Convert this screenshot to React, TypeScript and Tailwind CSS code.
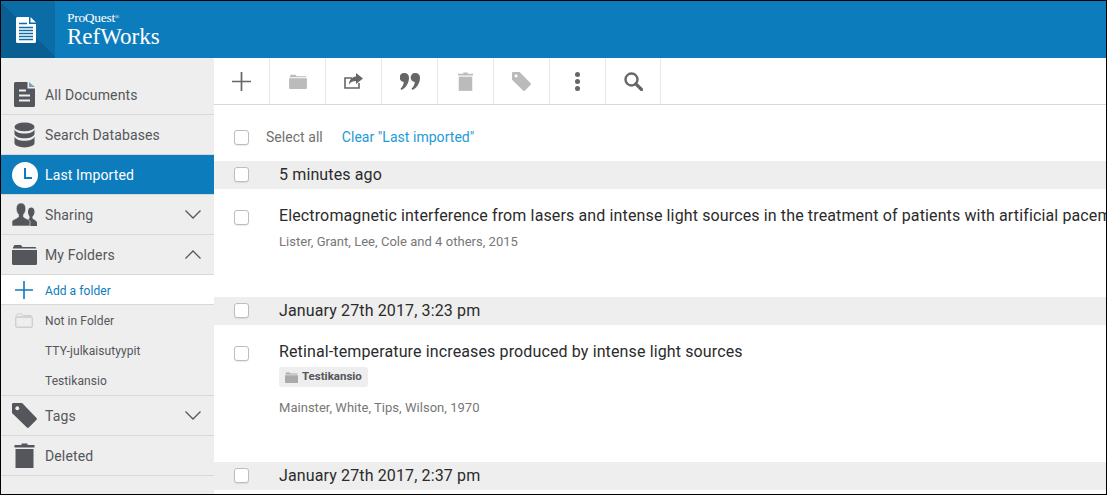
const dark = "#54565b"
const gray = "#bbbbbb"

function DocIcon({ className = "" }: { className?: string }) {
  return (
    <svg viewBox="0 0 21 25" className={className}>
      <path d="M1.500 0H13.500V6.500H21V23.500A1.500 1.500 0 0 1 19.500 25H1.500A1.500 1.500 0 0 1 0 23.500V1.500A1.500 1.500 0 0 1 1.500 0Z" fill={dark} />
      <path d="M15 0L21 5H15Z" fill="#7d9fb8" />
      <path d="M5 8.500h7M5 13.500h11M5 18.500h11" stroke="#eeeeee" strokeWidth="2" fill="none" />
    </svg>
  )
}

function HeaderDoc() {
  return (
    <svg viewBox="0 0 20 26" className="w-[20px] h-[26px]">
      <path d="M1.500 0H13V7H20V24.500A1.500 1.500 0 0 1 18.500 26H1.500A1.500 1.500 0 0 1 0 24.500V1.500A1.500 1.500 0 0 1 1.500 0Z" fill="#fff" />
      <path d="M14.500 0L20 5.500H14.500Z" fill="#fff" />
      <path d="M3 6.500h8M3 10.500h14M3 13.500h14M3 16.500h14M3 19.500h14M3 22.500h14" stroke="#0b6ca6" strokeWidth="1.500" fill="none" />
    </svg>
  )
}

function DbIcon() {
  return (
    <svg viewBox="0 0 22 26" className="w-[21px] h-[26px]">
      <ellipse cx="11" cy="4.500" rx="10.500" ry="4.500" fill={dark} />
      <path d="M.5 7c1 3 5 4.500 10.500 4.500S20.500 10 21.500 7v5c-1 3-5 4.500-10.500 4.500S1.500 15 .5 12Z" fill={dark} />
      <path d="M.5 14.500c1 3 5 4.500 10.500 4.500s9.500-1.500 10.500-4.500v7C21.500 24 17 26 11 26S.5 24 .5 21.500Z" fill={dark} />
    </svg>
  )
}

function ClockIcon() {
  return (
    <svg viewBox="0 0 26 26" className="w-[26px] h-[26px]">
      <circle cx="13" cy="13" r="13" fill="#fff" />
      <path d="M13 6v10h7" stroke="#0d7cbd" strokeWidth="2" fill="none" />
    </svg>
  )
}

function PeopleIcon() {
  return (
    <svg viewBox="0 0 25 23" className="w-[25px] h-[23px]">
      <path d="M16 23H25V19.500C25 18 21.500 16.500 20.500 15.500V13.500C21.800 12.500 22.500 10.500 22.500 8.500C22.500 6 21 4.500 19.300 4.500C17.500 4.500 16 6 16 8.500C16 10.500 16.500 12 17.500 13.500V15.500L15 17Z" fill={dark} />
      <path d="M0 23V18.500C0 17 4.500 15.500 6.500 14V11.500C5 10 4.300 8 4.300 5.500C4.300 2 6.300 0 9 0S13.700 2 13.700 5.500C13.700 8 13 10 11.500 11.500V14C13.500 15.500 18 17 18 18.500V23Z" fill={dark} stroke="#eeeeee" strokeWidth=".6" />
    </svg>
  )
}

function FolderIcon({ color = dark, className = "" }: { color?: string; className?: string }) {
  return (
    <svg viewBox="0 0 25 21" className={className}>
      <path d="M1 3.500L2.500 1H9L10.500 3H23.500L24.500 4.500H1Z" fill={color} />
      <path d="M0 6H25V19.500A1.500 1.500 0 0 1 23.500 21H1.500A1.500 1.500 0 0 1 0 19.500Z" fill={color} />
    </svg>
  )
}

function OutlineFolder() {
  return (
    <svg viewBox="0 0 18 15" className="w-[18px] h-[15px]">
      <path d="M1 3V2L2 1H7L8 2.500H16L17 4H1" fill="none" stroke="#cfcfcf" strokeWidth="1" />
      <rect x=".7" y="4" width="16.600" height="10.300" rx="1.500" fill="none" stroke="#cfcfcf" strokeWidth="1.400" />
    </svg>
  )
}

function TagIcon({ color = dark, hole = "#eeeeee", className = "" }: { color?: string; hole?: string; className?: string }) {
  return (
    <svg viewBox="0 0 26 26" className={className}>
      <path d="M1.500 0H10.500L25.500 15.500Q26.300 16.500 25.500 17.500L17.500 25.500Q16.500 26.300 15.500 25.500L0 10.500V1.500A1.500 1.500 0 0 1 1.500 0Z" fill={color} />
      <circle cx="5.500" cy="5.500" r="2" fill={hole} />
    </svg>
  )
}

function TrashIcon({ color = dark, className = "" }: { color?: string; className?: string }) {
  return (
    <svg viewBox="0 0 20 25" className={className}>
      <path d="M7 2V.5H13V2H20V4.500H0V2Z" fill={color} />
      <path d="M1 6H19V25H1Z" fill={color} />
    </svg>
  )
}

function PlusIcon({ size, color }: { size: string; color: string }) {
  return (
    <svg viewBox="0 0 20 20" className={size}>
      <path d="M0 10H20M10 0V20" stroke={color} strokeWidth="1.800" fill="none" />
    </svg>
  )
}

function Chevron({ up }: { up?: boolean }) {
  return (
    <svg viewBox="0 0 16 9" className="w-[16px] h-[9px] mr-[13px]">
      <path d={up ? "M.5 8.500L8 1L15.500 8.500" : "M.5 .5L8 8L15.500 .5"} stroke="#55565b" strokeWidth="1.300" fill="none" />
    </svg>
  )
}

function SideRow({ icon, label, chevron, active }: { icon: React.ReactNode; label: string; chevron?: "up" | "down"; active?: boolean }) {
  return (
    <div className={`h-10 flex items-center border-b border-[#d8d8d8] ${active ? "bg-[#0d7cbd] text-white" : "text-[#55565b]"}`}>
      <div className="w-[44px] flex justify-center shrink-0 pl-[3px]">{icon}</div>
      <span className="text-[14px] tracking-[0.13px] flex-1 pt-[2px]">{label}</span>
      {chevron && <Chevron up={chevron === "up"} />}
    </div>
  )
}

function SubRow({ label, icon }: { label: string; icon?: React.ReactNode }) {
  return (
    <div className="h-[30px] flex items-center text-[12px] tracking-[0.07px] text-[#55565b]">
      <div className="w-[44px] flex justify-center shrink-0 pl-[1px]">{icon}</div>
      <span className="pt-[2px]">{label}</span>
    </div>
  )
}

function ToolCell({ children, last }: { children: React.ReactNode; last?: boolean }) {
  return <div className={`${last ? "w-[55px]" : "w-[56px]"} h-full flex items-center justify-center border-r border-[#e8e8e8]`}>{children}</div>
}

function Check() {
  return <div className="w-[15px] h-[15px] rounded-[3px] border border-[#bdbdbd] bg-white shrink-0 shadow-[0_1px_1px_rgba(0,0,0,0.08)]" />
}

function DateBand({ label }: { label: string }) {
  return (
    <div className="h-[28px] bg-[#eeeeee] flex items-center pl-[20px] shrink-0">
      <div className="mb-[1px]"><Check /></div>
      <span className="ml-[30px] text-[16px] tracking-[0.13px] text-[#2b2b2b]">{label}</span>
    </div>
  )
}

export default function App() {
  return (
    <div className="w-[1107px] h-[495px] flex flex-col border border-black overflow-hidden bg-white font-['Roboto',sans-serif]">
      {/* Header */}
      <div className="h-[57px] bg-[#0d7cbd] flex shrink-0">
        <div className="w-[54px] bg-[linear-gradient(45deg,#0a5f92_50%,#0b6ca6_50%)] flex items-center justify-center pr-[4px]">
          <HeaderDoc />
        </div>
        <div className="ml-[12px] pt-[10px] text-white font-['Liberation_Serif',serif]">
          <div className="text-[13.500px] leading-[14px] tracking-[-0.3px]">ProQuest<sup className="text-[6px]">®</sup></div>
          <div className="text-[23px] leading-[24px]">RefWorks</div>
        </div>
      </div>

      <div className="flex flex-1 min-h-0">
        {/* Sidebar */}
        <div className="w-[213px] bg-[#eeeeee] pt-[17px] shrink-0">
          <SideRow icon={<DocIcon className="w-[21px] h-[25px]" />} label="All Documents" />
          <SideRow icon={<DbIcon />} label="Search Databases" />
          <SideRow icon={<ClockIcon />} label="Last Imported" active />
          <SideRow icon={<PeopleIcon />} label="Sharing" chevron="down" />
          <SideRow icon={<FolderIcon className="w-[25px] h-[21px]" />} label="My Folders" chevron="up" />
          <div className="h-[30px] bg-white flex items-center text-[12px] tracking-[0.07px] text-[#0d7cbd] border-b border-[#d8d8d8]">
            <div className="w-[44px] flex justify-center shrink-0 pl-[1px]">
              <PlusIcon size="w-[18px] h-[18px]" color="#0d7cbd" />
            </div>
            <span className="pt-[2px]">Add a folder</span>
          </div>
          <div className="border-b border-[#d8d8d8]">
            <SubRow label="Not in Folder" icon={<OutlineFolder />} />
            <SubRow label="TTY-julkaisutyypit" />
            <SubRow label="Testikansio" />
          </div>
          <SideRow icon={<TagIcon className="w-[25px] h-[25px]" />} label="Tags" chevron="down" />
          <SideRow icon={<TrashIcon className="w-[21px] h-[25px]" />} label="Deleted" />
        </div>

        {/* Main */}
        <div className="flex-1 min-w-0 flex flex-col overflow-hidden">
          <div className="h-[47px] flex border-b border-[#d8d8d8] shrink-0">
            <ToolCell><PlusIcon size="w-[19px] h-[19px]" color="#666" /></ToolCell>
            <ToolCell><FolderIcon color={gray} className="w-[18px] h-[15px]" /></ToolCell>
            <ToolCell>
              <svg viewBox="0 0 19 16" className="w-[19px] h-[16px]">
                <path d="M8 5H1V15H15V10" fill="none" stroke="#666" strokeWidth="1.600" />
                <path d="M12 0L19 5.500L12 11V8C9 8 6.500 9 5 11.500C5 7 8 4 12 3.500Z" fill="#666" />
              </svg>
            </ToolCell>
            <ToolCell>
              <svg viewBox="0 0 20 17" className="w-[20px] h-[17px]">
                <path d="M4.500 0A4.500 4.500 0 0 1 9 4.500C9 10 6 15 1.500 17L.500 15.500C2.500 14 3.500 12 3.800 9A4.500 4.500 0 0 1 4.500 0Z" fill="#666" />
                <path d="M15.500 0A4.500 4.500 0 0 1 20 4.500C20 10 17 15 12.500 17L11.500 15.500C13.500 14 14.500 12 14.800 9A4.500 4.500 0 0 1 15.500 0Z" fill="#666" />
              </svg>
            </ToolCell>
            <ToolCell><TrashIcon color={gray} className="w-[15px] h-[19px]" /></ToolCell>
            <ToolCell><TagIcon color={gray} hole="#fff" className="w-[19px] h-[19px]" /></ToolCell>
            <ToolCell>
              <div className="flex flex-col gap-[2px]">
                <div className="w-[5px] h-[5px] rounded-full bg-[#666]" />
                <div className="w-[5px] h-[5px] rounded-full bg-[#666]" />
                <div className="w-[5px] h-[5px] rounded-full bg-[#666]" />
              </div>
            </ToolCell>
            <ToolCell last>
              <svg viewBox="0 0 19 19" className="w-[19px] h-[19px]">
                <circle cx="7.500" cy="7.500" r="6" fill="none" stroke="#666" strokeWidth="2.400" />
                <path d="M11.800 11.800L17.500 17.500" stroke="#666" strokeWidth="3.200" strokeLinecap="round" />
              </svg>
            </ToolCell>
          </div>

          <div className="h-[56px] flex items-center pl-[20px] pt-[8px] text-[14px] tracking-[0.04px] shrink-0">
            <Check />
            <span className="ml-[17px] text-[#707070]">Select all</span>
            <span className="ml-[19px] text-[#1e9ad6]">Clear "Last imported"</span>
          </div>

          <DateBand label="5 minutes ago" />
          <div className="h-[108px] pl-[20px] pt-[17px] flex shrink-0">
            <div className="pt-[4px]"><Check /></div>
            <div className="ml-[30px] whitespace-nowrap">
              <div className="text-[16px] tracking-[0.13px] leading-[20px] text-[#2b2b2b]">
                Electromagnetic interference from lasers and intense light sources in the treatment of patients with artificial pacemakers and other implantable devices
              </div>
              <div className="mt-[8px] text-[13px] tracking-[0.03px] leading-[16px] text-[#777]">Lister, Grant, Lee, Cole and 4 others, 2015</div>
            </div>
          </div>

          <DateBand label="January 27th 2017, 3:23 pm" />
          <div className="h-[137px] pl-[20px] pt-[17px] flex shrink-0">
            <div className="pt-[4px]"><Check /></div>
            <div className="ml-[30px]">
              <div className="text-[16px] tracking-[0.13px] leading-[20px] text-[#2b2b2b]">Retinal-temperature increases produced by intense light sources</div>
              <div className="mt-[5px] w-fit h-[20px] px-[6px] rounded-[3px] bg-[#eeeeee] flex items-center gap-[4px]">
                <FolderIcon color="#aaaaaa" className="w-[13px] h-[11px]" />
                <span className="text-[11.500px] font-bold text-[#55565b]">Testikansio</span>
              </div>
              <div className="mt-[13px] text-[13px] tracking-[0.03px] leading-[16px] text-[#777]">Mainster, White, Tips, Wilson, 1970</div>
            </div>
          </div>

          <DateBand label="January 27th 2017, 2:37 pm" />
        </div>
      </div>
    </div>
  )
}
